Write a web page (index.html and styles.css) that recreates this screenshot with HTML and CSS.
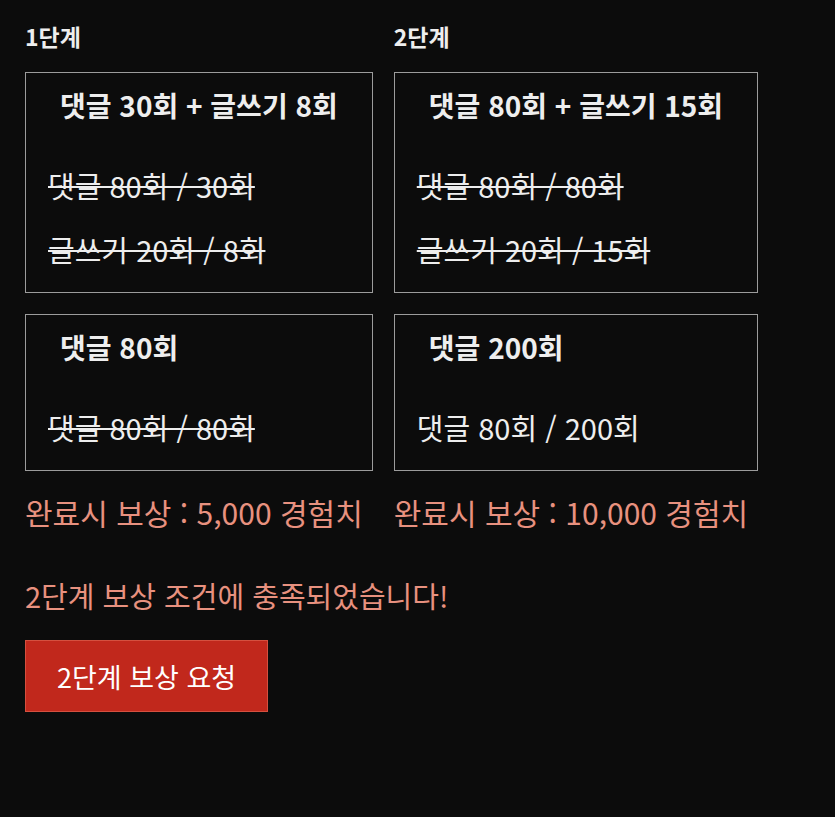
FILE: index.html
```html
<!DOCTYPE html>
<html lang="ko">
<head>
  <meta charset="UTF-8">
  <meta name="viewport" content="width=device-width, initial-scale=1.0">
  <title>단계별 보상</title>
  <link rel="stylesheet" href="styles.css">
</head>
<body>
  <div class="container">
    <div class="stages">
      <!-- 1단계 -->
      <div class="stage">
        <h3 class="stage-title">1단계</h3>
        <div class="mission">
          <h4>댓글 30회 + 글쓰기 8회</h4>
          <p class="done">댓글 80회 / 30회</p>
          <p class="done">글쓰기 20회 / 8회</p>
        </div>
        <div class="mission">
          <h4>댓글 80회</h4>
          <p class="done">댓글 80회 / 80회</p>
        </div>
        <div class="reward">완료시 보상 : 5,000 경험치</div>
      </div>

      <!-- 2단계 -->
      <div class="stage">
        <h3 class="stage-title">2단계</h3>
        <div class="mission">
          <h4>댓글 80회 + 글쓰기 15회</h4>
          <p class="done">댓글 80회 / 80회</p>
          <p class="done">글쓰기 20회 / 15회</p>
        </div>
        <div class="mission">
          <h4>댓글 200회</h4>
          <p>댓글 80회 / 200회</p>
        </div>
        <div class="reward">완료시 보상 : 10,000 경험치</div>
      </div>
    </div>

    <p class="notice">2단계 보상 조건에 충족되었습니다!</p>
    <button class="request">2단계 보상 요청</button>
  </div>
</body>
</html>
```

FILE: styles.css
```css
body {
  font-family: "Noto Sans CJK KR", "Noto Sans", sans-serif;
  background-color: #0c0c0c;
  color: #eeeeee;
  margin: 0;
  padding: 0;
}

.container {
  padding: 20px 25px;
}

.stages {
  display: grid;
  grid-template-columns: auto auto;
  justify-content: start;
  column-gap: 21px;
}

.stage {
  display: flex;
  flex-direction: column;
}

.stage-title {
  margin: 0 0 20px;
  font-size: 23px;
  line-height: 32px;
  font-weight: bold;
}

.mission {
  border: 1px solid #9c9c9c;
  padding: 12px 22px 23px;
  margin-bottom: 21px;
}

.mission h4 {
  margin: 0 0 40px;
  padding: 0 12px;
  font-size: 28px;
  line-height: 40px;
  font-weight: bold;
  white-space: nowrap;
}

.mission p {
  margin: 24px 0 0;
  font-size: 29px;
  line-height: 40px;
  white-space: nowrap;
}

.mission h4 + p {
  margin-top: 0;
}

.done {
  text-decoration: line-through;
  text-decoration-thickness: 2px;
}

.reward {
  font-size: 30px;
  line-height: 40px;
  color: #e8917f;
  white-space: nowrap;
}

.notice {
  margin: 43px 0 25px;
  font-size: 29px;
  line-height: 40px;
  color: #e8917f;
}

.request {
  font-family: inherit;
  font-size: 27px;
  color: #fff;
  background-color: #c1281c;
  border: 1px solid #d5503f;
  padding: 0 31px;
  height: 72px;
  cursor: pointer;
}
```
